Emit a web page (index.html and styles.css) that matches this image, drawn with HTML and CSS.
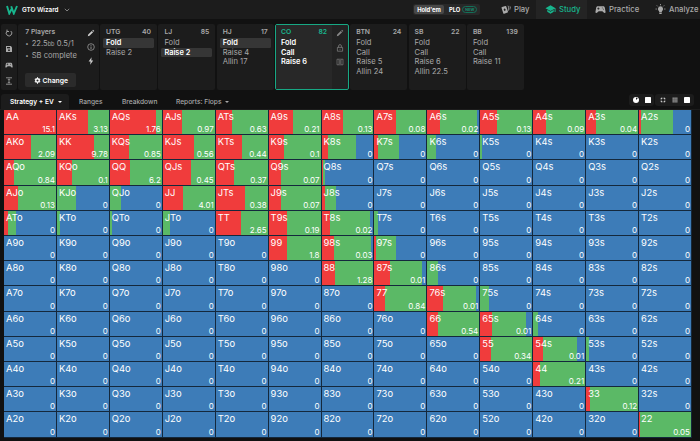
FILE: index.html
```html
<!DOCTYPE html>
<html lang="en">
<head>
  <meta charset="UTF-8" />
  <meta name="viewport" content="width=device-width, initial-scale=1.0"/>
  <title>GTO Wizard</title>
  <link rel="stylesheet" href="styles.css">
</head>
<body>

  <!-- TOP BAR -->
  <header class="topbar">
    <svg class="logo" viewBox="0 0 12 10"><path d="M1 1l2.3 7.5L5.6 4M5.2 1.2l2.6 7.3L11 1" fill="none" stroke="#18b58d" stroke-width="1.9"/></svg>
    <span class="brand">GTO Wizard</span>
    <svg class="chevron" viewBox="0 0 6 4"><path d="M.8.8L3 3 5.2.8" fill="none" stroke="#999" stroke-width=".8"/></svg>

    <div class="game-switch">
      <span class="game active">Hold'em</span>
      <span class="game">PLO <span class="new">NEW</span></span>
    </div>

    <nav class="main-nav">
      <a class="nav-play">
        <svg viewBox="0 0 12 12"><rect x="2.4" y="2.6" width="5.4" height="7.6" rx=".8" transform="rotate(-18 5 6)"/><path d="M8.3 2.2l1.2.4-.4 4.8M10.6 2.6l.8.5-.7 3" fill="none" stroke="#aaa" stroke-width=".8"/><path d="M5 4.6l1.3 1.8L5.3 8 3.9 6.3z" fill="#1c1c1c"/></svg>
        Play
      </a>
      <a class="nav-study active">
        <svg viewBox="0 0 12 12"><path d="M6 1.400L.5 4.500 6 7.600l4.500-2.500v3.600h1V4.500z"/><path d="M2.500 6.400v2.100L6 10.500l3.500-2V6.400L6 8.400z"/></svg>
        Study
      </a>
      <a class="nav-practice">
        <svg viewBox="0 0 12 12"><path d="M3 2.500h6c1 0 1.500.6 1.700 1.500l.8 4.500c.2 1.400-1.200 1.800-2 .9L8 7.800H4L2.500 9.400c-.8.9-2.200.5-2-.9L1.300 4C1.500 3.100 2 2.500 3 2.500z"/><path d="M2.500 5h2.400M3.700 3.800v2.400M7.500 4.300h.9M8.700 5.700h.9" stroke="#1c1c1c" stroke-width=".8"/></svg>
        Practice
      </a>
      <a class="nav-analyze">
        <svg viewBox="0 0 12 12"><path d="M6 2.500a2.900 2.900 0 0 0-1.500 5.300V9h3V7.800A2.900 2.900 0 0 0 6 2.500zM4.700 9.600h2.600v1.300H4.700z"/><path d="M6 0v1.400M.6 5.500H2M10 5.500h1.400M2 1.600l1 1M10 1.600l-1 1" stroke="#aaa" stroke-width=".9"/></svg>
        Analyze
      </a>
    </nav>
  </header>

  <!-- POSITIONS -->
  <section class="positions">
    <div class="tools">
      <svg viewBox="0 0 8 8"><path d="M2 2.200A2.800 2.800 0 1 0 5.800 2M2 .6v1.900h2" fill="none" stroke="#aaa" stroke-width=".9"/></svg>
      <svg viewBox="0 0 8 8"><path d="M1 1h4.800L7 2.200V7H1z" fill="#aaa"/><path d="M2 2h3v1.300H2z" fill="#1c1c1c"/><circle cx="4" cy="5.200" r=".9" fill="#1c1c1c"/></svg>
      <svg viewBox="0 0 12 12"><path d="M3 2.500h6c1 0 1.500.6 1.700 1.500l.8 4.500c.2 1.400-1.200 1.800-2 .9L8 7.800H4L2.500 9.400c-.8.9-2.200.5-2-.9L1.300 4C1.500 3.100 2 2.500 3 2.500z" fill="#aaa"/><path d="M2.500 5h2.400M3.700 3.800v2.400M7.500 5h1.500" stroke="#1c1c1c" stroke-width=".8"/></svg>
      <svg viewBox="0 0 8 8"><path d="M1 .8h6M1 7.200h6M4 2v4M3 2.800L4 1.800l1 1M3 5.200l1 1 1-1" fill="none" stroke="#aaa" stroke-width=".8"/></svg>
    </div>

    <div class="setup">
      <div class="setup-info">
        <div class="setup-title">7 Players</div>
        <ul>
          <li>22.5<small>bb</small> 0.5/1</li>
          <li>SB complete</li>
        </ul>
        <button class="change">
          <svg viewBox="0 0 8 8"><circle cx="4" cy="4" r="2" fill="none" stroke="#fff" stroke-width="1.6"/><path d="M4 .4v1.400M4 6.200v1.400M.9 2.200l1.200.7M5.900 5.100l1.200.7M.9 5.800l1.200-.7M5.900 2.900l1.200-.7" stroke="#fff" stroke-width="1.2"/></svg>
          Change
        </button>
      </div>
      <div class="setup-icons">
        <svg viewBox="0 0 8 8"><path d="M.8 7.200l.4-1.700 3.600-3.600L6.100 3.200 2.500 6.800zM5.300 1.400l.7-.7 1.300 1.300-.7.7z" fill="#ccc"/></svg>
        <svg viewBox="0 0 8 8"><circle cx="4" cy="4" r="3.3" fill="none" stroke="#aaa" stroke-width=".7"/><path d="M4 3.500V6M4 2v.8" stroke="#aaa" stroke-width=".8"/></svg>
        <svg viewBox="0 0 8 8"><path d="M4.600.3L1.600 4.500h1.900L3.200 7.700l3-4.300H4.300z" fill="#ccc"/></svg>
      </div>
    </div>

    <div class="seat">
      <div class="seat-head"><span>UTG</span><span>40</span></div>
      <div class="act picked">Fold</div>
      <div class="act">Raise 2</div>
    </div>
    <div class="seat">
      <div class="seat-head"><span>LJ</span><span>85</span></div>
      <div class="act">Fold</div>
      <div class="act picked">Raise 2</div>
    </div>
    <div class="seat">
      <div class="seat-head"><span>HJ</span><span>17</span></div>
      <div class="act picked">Fold</div>
      <div class="act">Raise 4</div>
      <div class="act">Allin 17</div>
    </div>
    <div class="seat current">
      <div class="seat-body">
        <div class="seat-head"><span>CO</span><span>82</span></div>
        <div class="act">Fold</div>
        <div class="act">Call</div>
        <div class="act">Raise 6</div>
      </div>
      <div class="seat-icons">
        <svg viewBox="0 0 8 8"><path d="M.8 7.200l.4-1.700 3.600-3.600L6.100 3.200 2.500 6.800zM5.300 1.400l.7-.7 1.300 1.300-.7.7z" fill="#888"/></svg>
        <svg viewBox="0 0 8 8"><path d="M1.400 3.400h5.200v3.800H1.400zM2.600 3.400V2a1.400 1.400 0 0 1 2.800 0v1.400M4 4.800v1" fill="none" stroke="#888" stroke-width=".7"/></svg>
        <svg viewBox="0 0 8 8"><path d="M3 1.200H1v5.600h2M5 1.200h2v5.600H5M4 .4v7.200M3 1.200v5.600M5 1.200v5.600" fill="none" stroke="#888" stroke-width=".6"/></svg>
      </div>
    </div>
    <div class="seat">
      <div class="seat-head"><span>BTN</span><span>24</span></div>
      <div class="act">Fold</div>
      <div class="act">Call</div>
      <div class="act">Raise 5</div>
      <div class="act">Allin 24</div>
    </div>
    <div class="seat">
      <div class="seat-head"><span>SB</span><span>22</span></div>
      <div class="act">Fold</div>
      <div class="act">Call</div>
      <div class="act">Raise 6</div>
      <div class="act">Allin 22.5</div>
    </div>
    <div class="seat">
      <div class="seat-head"><span>BB</span><span>139</span></div>
      <div class="act">Fold</div>
      <div class="act">Call</div>
      <div class="act">Raise 11</div>
    </div>
  </section>

  <!-- TABS -->
  <div class="tabs">
    <div class="tab active">Strategy + EV <i class="caret"></i></div>
    <div class="tab tab-ranges">Ranges</div>
    <div class="tab tab-breakdown">Breakdown</div>
    <div class="tab tab-reports">Reports: Flops <i class="caret"></i></div>
    <div class="view-group">
      <svg viewBox="0 0 6 6"><circle cx="3" cy="3" r="3"/><path d="M3 3V.4L4.800 1.200z" fill="#1c1c1c"/></svg>
      <svg viewBox="0 0 6 6"><rect width="6" height="6" rx=".6"/></svg>
    </div>
    <div class="view-group second">
      <svg viewBox="0 0 6 6"><path d="M1.200 2.400V1.200h1.200M3.600 1.200h1.200v1.200M4.800 3.600v1.200H3.600M2.400 4.800H1.200V3.600" fill="none" stroke="#fff" stroke-width=".9"/></svg>
      <svg viewBox="0 0 6 6"><path d="M.5.5h5v5h-5z" fill="#999"/><path d="M0 2.200h6M0 4h6M2.200 0v6M4 0v6" stroke="#333" stroke-width=".4"/></svg>
      <svg viewBox="0 0 6 6"><rect width="6" height="6" rx=".4"/></svg>
    </div>
  </div>

  <main class="matrix" id="matrix"></main>

  <script src="script.js"></script>
</body>
</html>
```

FILE: styles.css
```css
* {
  box-sizing: border-box;
}

body {
  margin: 0;
  width: 700px;
  height: 441px;
  overflow: hidden;
  background: #111;
  color: #a8a8a8;
  font-family: Inter, "Liberation Sans", sans-serif;
  font-size: 7.5px;
}

svg {
  display: block;
  flex: none;
}

/* top bar */
.topbar {
  display: flex;
  align-items: center;
  height: 19px;
  padding-left: 6px;
  background: #1c1c1c;
}

.logo {
  width: 12px;
  height: 10px;
}

.brand {
  margin-left: 4px;
  width: 37px;
  color: #fff;
  font-size: 6.3px;
  font-weight: 600;
  white-space: nowrap;
}

.chevron {
  width: 6px;
  height: 4px;
  margin-left: 5px;
}

.game-switch {
  display: flex;
  align-items: center;
  width: 67px;
  height: 11px;
  margin-left: 343px;
  padding: 1px;
  border-radius: 2px;
  background: #282828;
}

.game {
  display: flex;
  align-items: center;
  height: 9px;
  padding-left: 5px;
  color: #fff;
  font-size: 5.8px;
  font-weight: 700;
}

.game.active {
  width: 30px;
  padding: 0;
  justify-content: center;
  border-radius: 2px;
  background: #484848;
}

.new {
  margin-left: 2px;
  padding: 0 2px;
  border: 1px solid #137059;
  border-radius: 4px;
  color: #148f71;
  font-size: 3.7px;
  line-height: 5px;
}

.main-nav {
  display: flex;
  height: 19px;
  margin-left: 12px;
}

.main-nav a {
  display: flex;
  align-items: center;
  flex: none;
  height: 19px;
  padding-left: 8px;
  color: #aaa;
  font-size: 7.7px;
  font-weight: 500;
}

.main-nav svg {
  width: 11px;
  height: 11px;
  margin-right: 3px;
  fill: #aaa;
}

.main-nav .nav-play {
  width: 44px;
}

.main-nav .nav-study {
  width: 51px;
  padding-left: 9px;
  background: #242424;
  color: #18b58d;
}

.main-nav .nav-study svg {
  fill: #18b58d;
}

.main-nav .nav-practice {
  width: 60px;
}

/* positions row */
.positions {
  display: flex;
  gap: 1.3px;
  height: 66px;
  margin: 5px 0 0 1px;
}

.tools,
.setup,
.seat {
  flex: none;
  border-radius: 2px;
  background: #1c1c1c;
}

.tools {
  display: flex;
  flex-direction: column;
  align-items: center;
  justify-content: space-between;
  width: 16px;
  padding: 5px 0;
}

.tools svg {
  width: 8px;
  height: 8px;
}

.setup {
  display: flex;
  width: 80.5px;
}

.setup-info {
  width: 66px;
  padding: 3px 0 0 7px;
}

.setup-title {
  font-size: 6.8px;
  font-weight: 600;
  line-height: 10px;
}

.setup ul {
  margin: 1px 0 0;
  padding: 0;
  list-style: none;
  font-size: 7.6px;
  line-height: 11.5px;
  white-space: nowrap;
}

.setup li {
  height: 11.5px;
}

.setup li::before {
  content: "•";
  margin-right: 3px;
  font-size: 6px;
  line-height: 0;
}

.setup small {
  font-size: 5.6px;
  line-height: 0;
}

.change {
  display: flex;
  align-items: center;
  justify-content: center;
  gap: 2px;
  width: 51px;
  height: 14px;
  margin: 12px 0 0;
  padding: 0;
  border: 0;
  border-radius: 2px;
  background: #2b2b2b;
  color: #fff;
  font: 600 6.8px Inter, sans-serif;
}

.change svg {
  width: 7px;
  height: 7px;
}

.setup-icons {
  display: flex;
  flex-direction: column;
  gap: 6px;
  padding: 5px 0 0 3px;
}

.setup-icons svg {
  width: 8px;
  height: 8px;
}

.seat {
  width: 57px;
  padding: 3px 3px 0;
}

.seat-head {
  display: flex;
  justify-content: space-between;
  height: 11px;
  padding: 0 3px;
  font-size: 6.8px;
  font-weight: 600;
  line-height: 10px;
}

.act {
  height: 9.5px;
  padding-left: 3px;
  border-radius: 1.5px;
  font-size: 7.6px;
  line-height: 9.9px;
  white-space: nowrap;
}

.act.picked {
  background: #363636;
  color: #fff;
  font-size: 7.4px;
  font-weight: 600;
}

.seat.current {
  display: flex;
  width: 74px;
  padding: 0;
  border: 1px solid #17a884;
  background: #222;
}

.seat-body {
  width: 56px;
  padding: 2px 2px 0;
  background: #282828;
}

.current .act {
  color: #fff;
  font-size: 7.4px;
  font-weight: 600;
}

.current .seat-head {
  color: #18b58d;
}

.seat-icons {
  display: flex;
  flex-direction: column;
  gap: 6.5px;
  padding: 4px 0 0 4px;
}

.seat-icons svg {
  width: 8px;
  height: 8px;
}

/* tabs */
.tabs {
  display: flex;
  height: 16px;
  margin-top: 4px;
  padding-left: 1px;
  border-bottom: 1px solid #1c1c1c;
  font-size: 6.6px;
  font-weight: 500;
}

.tab {
  display: flex;
  align-items: center;
  flex: none;
  height: 15px;
  white-space: nowrap;
}

.tab.active {
  width: 68px;
  padding-left: 9px;
  border-radius: 3px 3px 0 0;
  background: #1c1c1c;
  color: #fff;
  font-weight: 600;
}

.caret {
  margin-left: 4px;
  border: 2px solid transparent;
  border-top-color: currentColor;
  border-bottom: 0;
}

.tab-ranges {
  width: 53px;
  padding-left: 10px;
}

.tab-breakdown {
  width: 54px;
}

.tab-reports {
  width: 453px;
}

.view-group {
  display: flex;
  align-items: center;
  justify-content: center;
  flex: none;
  gap: 6px;
  width: 25px;
  height: 12px;
  border-radius: 3px;
  background: #1c1c1c;
}

.view-group svg {
  width: 6px;
  height: 6px;
  fill: #fff;
}

.view-group.second {
  width: 39px;
  margin-left: 1px;
}

/* hand matrix */
.matrix {
  display: grid;
  grid-template-columns: repeat(13, 1fr);
  grid-template-rows: repeat(13, 1fr);
  gap: 1px;
  width: 688px;
  height: 327.5px;
  margin-left: 4px;
  padding: 0 1px 1px 0;
  background: #14283c;
}

.hand {
  display: flex;
  flex-direction: column;
  justify-content: space-between;
  min-width: 0;
  min-height: 0;
  padding: 0 1px 0 2px;
  background: #3d7cb8;
  color: #fff;
}

.name {
  font-size: 9.4px;
  line-height: 13px;
}

.ev {
  align-self: flex-end;
  font-size: 8px;
  line-height: 10px;
}
```

FILE: script.js
```js
const ranks = "AKQJT98765432".split("");

// hand: [raise %, call %, ev], everything else is a pure fold
const hands = {
  AA: [100, 0, 15.1], AKs: [59, 41, 3.13], AQs: [88, 12, 1.76], AJs: [37, 63, 0.97],
  ATs: [31, 69, 0.63], A9s: [46, 54, 0.21], A8s: [41, 59, 0.13], A7s: [42, 58, 0.08],
  A6s: [25, 71, 0.02], A5s: [32, 68, 0.13], A4s: [25, 75, 0.09], A3s: [20, 80, 0.04], A2s: [3, 62, 0],
  AKo: [52, 48, 2.09], KK: [71, 29, 9.78], KQs: [37, 63, 0.85], KJs: [59, 41, 0.56],
  KTs: [50, 50, 0.44], K9s: [28, 72, 0.1], K8s: [12, 54, 0], K7s: [7, 42, 0], K6s: [0, 17.5, 0], K5s: [0, 4, 0],
  AQo: [20, 80, 0.84], KQo: [29, 71, 0.1], QQ: [38.5, 61.5, 6.2], QJs: [54, 46, 0.45],
  QTs: [35, 65, 0.37], Q9s: [23.5, 76.5, 0.07], Q8s: [2, 3, 0],
  AJo: [26, 74, 0.13], KJo: [0, 36.5, 0], QJo: [0, 21.5, 0], JJ: [39, 61, 4.01],
  JTs: [56, 44, 0.38], J9s: [23.5, 76.5, 0.07], J8s: [5, 22, 0],
  ATo: [7, 15.5, 0], KTo: [0, 6, 0], QTo: [0, 4, 0], JTo: [0, 13, 0],
  TT: [48, 52, 2.65], T9s: [34, 66, 0.19], T8s: [16.5, 78, 0.02], T7s: [0, 7, 0],
  99: [35, 65, 1.8], "98s": [24, 73, 0.03], "97s": [4, 39, 0],
  88: [25, 75, 1.28], "87s": [30, 63, 0.01], "86s": [0, 21, 0],
  77: [21, 79, 0.84], "76s": [30, 64, 0.01], "75s": [0, 17, 0],
  66: [21, 79, 0.54], "65s": [24, 64, 0.01], "64s": [0, 10, 0],
  55: [21, 79, 0.34], "54s": [19, 65, 0.01], "53s": [0, 5.5, 0],
  44: [14, 86, 0.21], 33: [7, 93, 0.12], 22: [1, 99, 0.05]
};

const matrix = document.getElementById("matrix");

ranks.forEach((row, r) => {
  ranks.forEach((col, c) => {
    let name = row + col;
    if (c > r) name = row + col + "s";
    if (c < r) name = col + row + "o";

    const [raise, call, ev] = hands[name] || [0, 0, 0];
    const end = raise + call;
    const cell = document.createElement("div");
    cell.className = "hand";
    if (end > 0) {
      cell.style.background = `linear-gradient(90deg, #f03c3c ${raise}%, #5bb966 ${raise}% ${end}%, #3d7cb8 ${end}%)`;
    }
    cell.innerHTML = `<span class="name">${name}</span><span class="ev">${ev}</span>`;
    matrix.appendChild(cell);
  });
});
```
